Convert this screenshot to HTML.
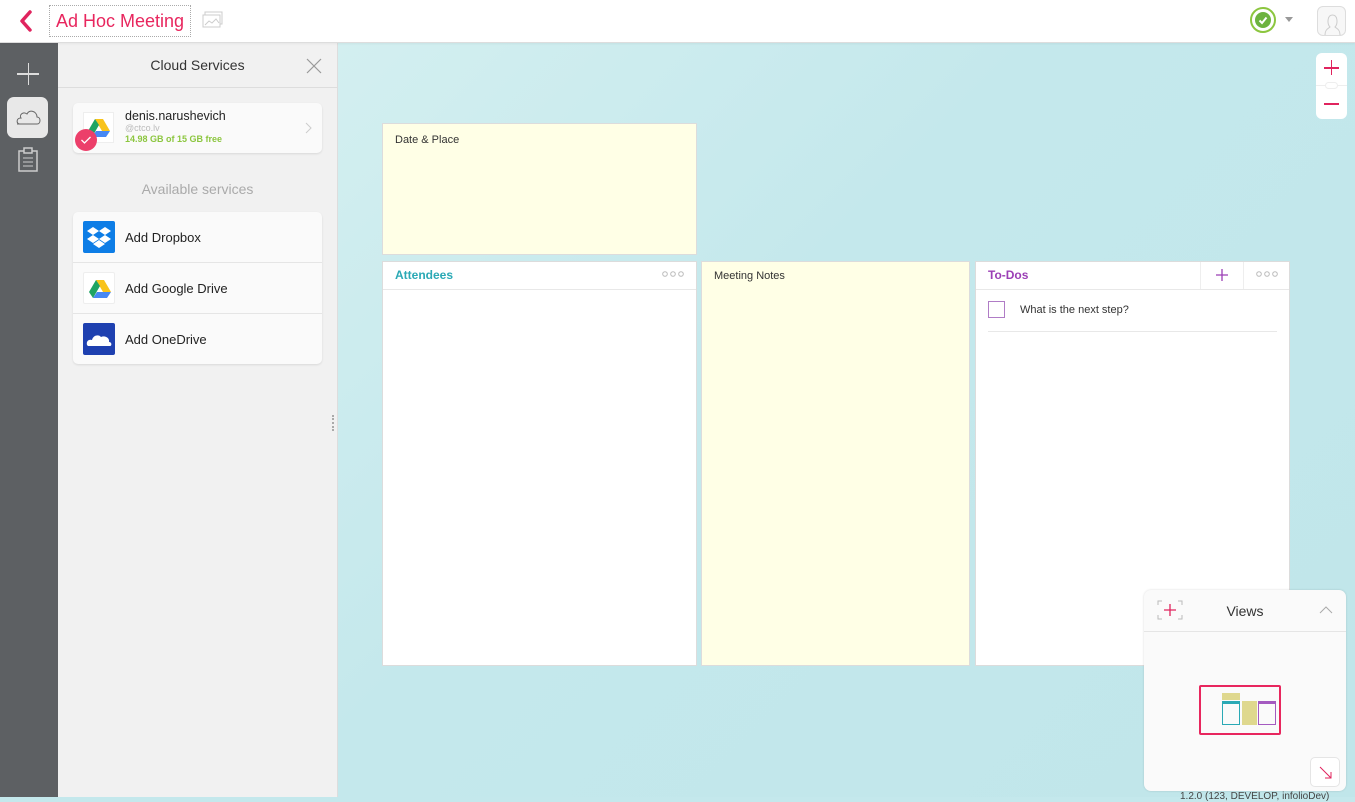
<!DOCTYPE html>
<html><head><meta charset="utf-8"><style>
*{box-sizing:border-box;margin:0;padding:0}
body{width:1355px;height:797px;overflow:hidden;font-family:"Liberation Sans",sans-serif;position:relative;background:#c4e8ec}
.top{position:absolute;left:0;top:0;width:1355px;height:43px;background:#fff;border-bottom:1px solid #ddd;z-index:5;box-shadow:0 1px 2px rgba(0,0,0,.05)}
.canvas{position:absolute;left:338px;top:43px;right:0;bottom:0;background:linear-gradient(135deg,#d3eff0 0%,#c4e8ec 40%,#c0e6ea 100%)}
.rail{position:absolute;left:0;top:43px;width:58px;bottom:0;background:#5d6063}
.panel{position:absolute;left:58px;top:43px;width:280px;bottom:0;background:#f1f1f1;border-right:1px solid #ddd}
.card{position:absolute;background:#fff;border:1px solid #dcdcdc}
.lbl{font-size:11px;color:#333}
</style></head><body>
<div class="top">
 <svg style="position:absolute;left:17px;top:10px" width="18" height="22"><path d="M13 2 L5 11 L13 20" stroke="#e0245e" stroke-width="3.5" fill="none" stroke-linecap="round" stroke-linejoin="round"/></svg>
 <div style="position:absolute;left:49px;top:5px;width:142px;height:32px;border:1px dotted #aaa;color:#e8265e;font-size:18px;line-height:30px;padding-left:6px">Ad Hoc Meeting</div>
 <svg style="position:absolute;left:202px;top:11px" width="22" height="18"><rect x="3" y="1" width="17" height="12" fill="none" stroke="#ccc"/><rect x="1" y="4" width="17" height="12" fill="#fff" stroke="#ccc"/><path d="M3 14 L7 10 L10 12 L14 8 L17 12" fill="none" stroke="#ccc"/></svg>
 <div style="position:absolute;left:1250px;top:7px;width:26px;height:26px;border-radius:50%;border:2px solid #8cc63f"></div>
 <div style="position:absolute;left:1255px;top:12px;width:16px;height:16px;border-radius:50%;background:#6db33f"><svg width="16" height="16"><path d="M4.5 8.5L7 11L11.5 5.5" fill="none" stroke="#fff" stroke-width="2"/></svg></div>
 <div style="position:absolute;left:1285px;top:17px;border:4px solid transparent;border-top:5px solid #999"></div>
 <div style="position:absolute;left:1317px;top:6px;width:29px;height:30px;border:1px solid #ddd;border-radius:6px;background:#f7f7f7">
  <svg width="29" height="30"><path d="M7 28 C7 22 11 21 12 20 C9 17 9 8 14.5 8 C20 8 20 17 17 20 C18 21 22 22 22 28" fill="none" stroke="#ccc"/></svg></div>
</div>
<div class="canvas"></div>
<div style="position:absolute;left:1316px;top:53px;width:31px;height:66px;background:#fff;border-radius:6px">
 <div style="position:absolute;left:8px;top:14px;width:15px;height:1.5px;background:#e0245e"></div>
 <div style="position:absolute;left:14.5px;top:7px;width:1.5px;height:15px;background:#e0245e"></div>
 <div style="position:absolute;left:0;top:32px;width:31px;height:1px;background:#eee"></div>
 <div style="position:absolute;left:9px;top:29px;width:13px;height:7px;border-radius:4px;border:1px solid #eee;background:#fff"></div>
 <div style="position:absolute;left:8px;top:50px;width:15px;height:1.5px;background:#e0245e"></div>
</div>
<div class="rail">
 <div style="position:absolute;left:17px;top:30px;width:22px;height:1.5px;background:#ddd"></div>
 <div style="position:absolute;left:27.5px;top:20px;width:1.5px;height:22px;background:#ddd"></div>
 <div style="position:absolute;left:7px;top:54px;width:41px;height:41px;border-radius:7px;background:#e8e8e8">
  <svg width="41" height="41"><path d="M10 27 H30 C34 27 34 20 30 20 C30 14 22 12 20 17 C16 14 12 18 14 21 C9 21 9 27 13 27" fill="none" stroke="#666"/></svg></div>
 <svg style="position:absolute;left:17px;top:104px" width="22" height="26"><rect x="2" y="4" width="18" height="20" fill="none" stroke="#ccc" stroke-width="1.5"/><rect x="7" y="1" width="8" height="5" fill="#5d6063" stroke="#ccc" stroke-width="1.5"/><path d="M6 11H16M6 15H16M6 19H16" stroke="#ccc"/></svg>
</div>
<div class="panel">
 <div style="position:absolute;left:0;top:0;width:279px;height:45px;border-bottom:1px solid #ddd;text-align:center;line-height:44px;font-size:14px;color:#333">Cloud Services</div>
 <svg style="position:absolute;left:248px;top:15px" width="16" height="16"><path d="M1 1L15 15M15 1L1 15" stroke="#999" stroke-width="1.2"/></svg>
 <div style="position:absolute;left:15px;top:60px;width:249px;height:50px;background:#fafafa;border-radius:5px;box-shadow:0 1px 2px rgba(0,0,0,.1)">
  <div style="position:absolute;left:10px;top:9px;width:31px;height:31px;background:#fff;border:1px solid #eee"></div>
  <svg style="position:absolute;left:14px;top:15px" width="24" height="20"><path d="M8 1H16L23 13H15Z" fill="#f8c31b"/><path d="M8 1L1 13L5 19L12 7Z" fill="#1fa463"/><path d="M5 19H19L23 13H9Z" fill="#4688f4"/></svg>
  <div style="position:absolute;left:2px;top:26px;width:22px;height:22px;border-radius:50%;background:#ec3f6a"><svg width="22" height="22"><path d="M6.5 11L9.5 14L15.5 8" fill="none" stroke="#fff" stroke-width="1.3"/></svg></div>
  <div style="position:absolute;left:52px;top:6px;font-size:12.5px;color:#222">denis.narushevich</div>
  <div style="position:absolute;left:52px;top:20px;font-size:9px;color:#bbb">@ctco.lv</div>
  <div style="position:absolute;left:52px;top:31px;font-size:9px;color:#8cc63f;font-weight:bold">14.98 GB of 15 GB free</div>
  <svg style="position:absolute;left:232px;top:19px" width="8" height="12"><path d="M1 1L6 6L1 11" fill="none" stroke="#ccc"/></svg>
 </div>
 <div style="position:absolute;left:0;top:138px;width:279px;text-align:center;font-size:14px;color:#aaa">Available services</div>
 <div style="position:absolute;left:15px;top:169px;width:249px;height:152px;background:#fafafa;border-radius:5px;box-shadow:0 1px 2px rgba(0,0,0,.1)">
  <div style="position:absolute;left:10px;top:9px;width:32px;height:32px;background:#0d7de6;border-radius:2px"><svg width="32" height="32"><path d="M10 6L4 10L10 14L16 10ZM22 6L28 10L22 14L16 10ZM10 14L4 18L10 22L16 18ZM22 14L28 18L22 22L16 18ZM10 23L16 27L22 23L16 19Z" fill="#fff"/></svg></div>
  <div style="position:absolute;left:52px;top:18px;font-size:13px;color:#222">Add Dropbox</div>
  <div style="position:absolute;left:0;top:50px;width:249px;height:1px;background:#e5e5e5"></div>
  <div style="position:absolute;left:10px;top:60px;width:32px;height:32px;background:#fff;border:1px solid #eee;border-radius:2px"><svg width="32" height="32"><path d="M12 7H20L27 19H19Z" fill="#f8c31b"/><path d="M12 7L5 19L9 25L16 13Z" fill="#1fa463"/><path d="M9 25H23L27 19H13Z" fill="#4688f4"/></svg></div>
  <div style="position:absolute;left:52px;top:69px;font-size:13px;color:#222">Add Google Drive</div>
  <div style="position:absolute;left:0;top:101px;width:249px;height:1px;background:#e5e5e5"></div>
  <div style="position:absolute;left:10px;top:111px;width:32px;height:32px;background:#1e40b0;border-radius:2px"><svg width="32" height="32"><path d="M4 22C3 18 6 16 9 17C10 12 16 11 18 14C22 12 27 15 26 19C29 19 29 23 27 23H5Z" fill="#fff"/></svg></div>
  <div style="position:absolute;left:52px;top:120px;font-size:13px;color:#222">Add OneDrive</div>
 </div>
 <div style="position:absolute;left:274px;top:372px;width:2px;height:16px;border-left:2px dotted #aaa"></div>
</div>
<div class="card" style="left:382px;top:123px;width:315px;height:132px;background:#ffffe6"><div class="lbl" style="position:absolute;left:12px;top:10px">Date &amp; Place</div></div>
<div class="card" style="left:382px;top:261px;width:315px;height:405px">
 <div style="position:absolute;left:12px;top:6px;font-size:12px;font-weight:bold;color:#2aa9b5">Attendees</div>
 <svg style="position:absolute;left:279px;top:9px" width="24" height="7"><circle cx="3" cy="3" r="2.3" fill="none" stroke="#bbb"/><circle cx="11" cy="3" r="2.3" fill="none" stroke="#bbb"/><circle cx="19" cy="3" r="2.3" fill="none" stroke="#bbb"/></svg>
 <div style="position:absolute;left:0;top:27px;width:313px;height:1px;background:#e8e8e8"></div>
</div>
<div class="card" style="left:701px;top:261px;width:269px;height:405px;background:#ffffe6"><div class="lbl" style="position:absolute;left:12px;top:8px">Meeting Notes</div></div>
<div class="card" style="left:975px;top:261px;width:315px;height:405px">
 <div style="position:absolute;left:12px;top:6px;font-size:12px;font-weight:bold;color:#9b3fb5">To-Dos</div>
 <div style="position:absolute;left:224px;top:0;width:1px;height:27px;background:#eee"></div>
 <div style="position:absolute;left:267px;top:0;width:1px;height:27px;background:#eee"></div>
 <svg style="position:absolute;left:240px;top:7px" width="12" height="12"><path d="M6 0V12M0 6H12" stroke="#9b3fb5" stroke-width="1.3"/></svg>
 <svg style="position:absolute;left:280px;top:9px" width="24" height="7"><circle cx="3" cy="3" r="2.3" fill="none" stroke="#bbb"/><circle cx="11" cy="3" r="2.3" fill="none" stroke="#bbb"/><circle cx="19" cy="3" r="2.3" fill="none" stroke="#bbb"/></svg>
 <div style="position:absolute;left:0;top:27px;width:313px;height:1px;background:#e8e8e8"></div>
 <div style="position:absolute;left:12px;top:39px;width:17px;height:17px;border:1.5px solid #b07cc6"></div>
 <div class="lbl" style="position:absolute;left:44px;top:42px">What is the next step?</div>
 <div style="position:absolute;left:12px;top:69px;width:289px;height:1px;background:#e8e8e8"></div>
</div>
<div style="position:absolute;left:1144px;top:590px;width:202px;height:201px;background:#fafafa;border-radius:7px;box-shadow:0 0 2px rgba(0,0,0,.15)">
 <div style="position:absolute;left:0;top:0;width:202px;height:42px;border-bottom:1px solid #e5e5e5"></div>
 <svg style="position:absolute;left:13px;top:10px" width="26" height="20"><path d="M1 5V1H5M21 1H25V5M25 15V19H21M5 19H1V15" fill="none" stroke="#bbb"/><path d="M13 4V16M7 10H19" stroke="#e0245e" stroke-width="1.3"/></svg>
 <div style="position:absolute;left:0;top:13px;width:202px;text-align:center;font-size:14px;color:#333">Views</div>
 <svg style="position:absolute;left:175px;top:15px" width="14" height="9"><path d="M1 8L7 2L13 8" fill="none" stroke="#aaa"/></svg>
 <div style="position:absolute;left:55px;top:95px;width:82px;height:50px;border:2px solid #e8265e;border-radius:2px"></div>
 <div style="position:absolute;left:78px;top:103px;width:18px;height:7px;background:#dfd88e"></div>
 <div style="position:absolute;left:78px;top:111px;width:18px;height:24px;border:1.5px solid #2aa9b5;border-top-width:3px"></div>
 <div style="position:absolute;left:98px;top:111px;width:15px;height:24px;background:#dfd88e"></div>
 <div style="position:absolute;left:114px;top:111px;width:18px;height:24px;border:1.5px solid #a45ac0;border-top-width:3px"></div>
 <div style="position:absolute;left:166px;top:167px;width:30px;height:30px;border:1px solid #e5e5e5;border-radius:5px;background:#fff"><svg width="30" height="30"><path d="M9 9L20 20M20 14V20H14" fill="none" stroke="#e0245e"/></svg></div>
</div>
<div style="position:absolute;left:1180px;top:791px;font-size:10px;color:#444">1.2.0 (123, DEVELOP, infolioDev)</div>
</body></html>
